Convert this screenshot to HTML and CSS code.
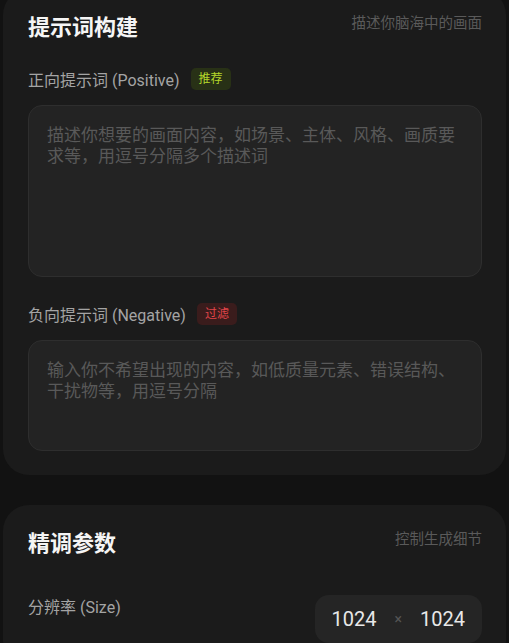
FILE: index.html
```html
<!DOCTYPE html>
<html lang="zh-CN">
<head>
    <meta charset="UTF-8">
    <meta name="viewport" content="width=device-width, initial-scale=1.0">
    <title>提示词构建</title>
    <link rel="stylesheet" href="styles.css">
</head>
<body>
    <div class="page">
        <section class="card">
            <div class="cardHeader">
                <h2>提示词构建</h2>
                <span class="hint">描述你脑海中的画面</span>
            </div>

            <div class="fieldLabel first">
                <label for="positive">正向提示词 (Positive)</label>
                <span class="badge green">推荐</span>
            </div>
            <textarea id="positive" class="prompt tall" placeholder="描述你想要的画面内容，如场景、主体、风格、画质要求等，用逗号分隔多个描述词"></textarea>

            <div class="fieldLabel">
                <label for="negative">负向提示词 (Negative)</label>
                <span class="badge red">过滤</span>
            </div>
            <textarea id="negative" class="prompt short" placeholder="输入你不希望出现的内容，如低质量元素、错误结构、干扰物等，用逗号分隔"></textarea>
        </section>

        <section class="card">
            <div class="cardHeader">
                <h2>精调参数</h2>
                <span class="hint">控制生成细节</span>
            </div>

            <div class="paramRow">
                <span class="paramLabel">分辨率 (Size)</span>
                <div class="sizeBox">
                    <span class="num">1024</span>
                    <span class="times">×</span>
                    <span class="num">1024</span>
                </div>
            </div>
        </section>
    </div>
</body>
</html>
```
FILE: styles.css
```css
body {
    margin: 0;
    background-color: #121212;
    font-family: Roboto, "Noto Sans CJK SC", sans-serif;
    color: #a8a8a8;
    overflow: hidden;
}

.page {
    margin-top: -11px;
    padding: 0 3px;
    display: flex;
    flex-direction: column;
    gap: 30px;
}

.card {
    background-color: #1b1b1b;
    border-radius: 26px;
    padding: 24px 24px 24px 25px;
    display: flex;
    flex-direction: column;
}

.cardHeader {
    display: flex;
    justify-content: space-between;
    align-items: flex-start;
}

.cardHeader h2 {
    margin: 0;
    font-size: 22px;
    line-height: 30px;
    font-weight: 700;
    color: #f5f5f5;
}

.hint {
    font-size: 14.5px;
    line-height: 20px;
    margin-top: 1px;
    color: #5a5a5a;
}

.fieldLabel {
    display: flex;
    align-items: center;
    gap: 11px;
    height: 22px;
    margin-top: 26px;
    margin-bottom: 15px;
}

.fieldLabel.first {
    margin-top: 25px;
}

.fieldLabel label {
    font-size: 16px;
    color: #a4a4a4;
}

.badge {
    font-size: 12px;
    line-height: 22px;
    padding: 0 8px;
    border-radius: 5px;
}

.green {
    background-color: #283116;
    color: #b4d62a;
}

.red {
    background-color: #3a1c1c;
    color: #e2454a;
}

.prompt {
    display: block;
    box-sizing: border-box;
    width: 100%;
    margin: 0;
    resize: none;
    background-color: #232323;
    border: 1px solid #2e2e2e;
    border-radius: 14px;
    padding: 19px 18px;
    font-family: Roboto, "Noto Sans CJK SC", sans-serif;
    font-size: 17px;
    line-height: 21px;
    color: #ddd;
    outline: none;
}

.prompt::placeholder {
    color: #595959;
}

.tall {
    height: 172px;
}

.short {
    height: 111px;
}

.paramRow {
    display: flex;
    justify-content: space-between;
    align-items: flex-start;
    margin-top: 38px;
}

.paramLabel {
    font-size: 16px;
    line-height: 20px;
    margin-top: 1px;
    color: #a4a4a4;
}

.sizeBox {
    display: flex;
    align-items: center;
    gap: 18px;
    height: 48px;
    margin-top: -2px;
    padding: 0 17px;
    background-color: #252525;
    border-radius: 14px;
}

.num {
    font-size: 20px;
    color: #e8e8e8;
}

.times {
    font-size: 14px;
    color: #555;
}
```
